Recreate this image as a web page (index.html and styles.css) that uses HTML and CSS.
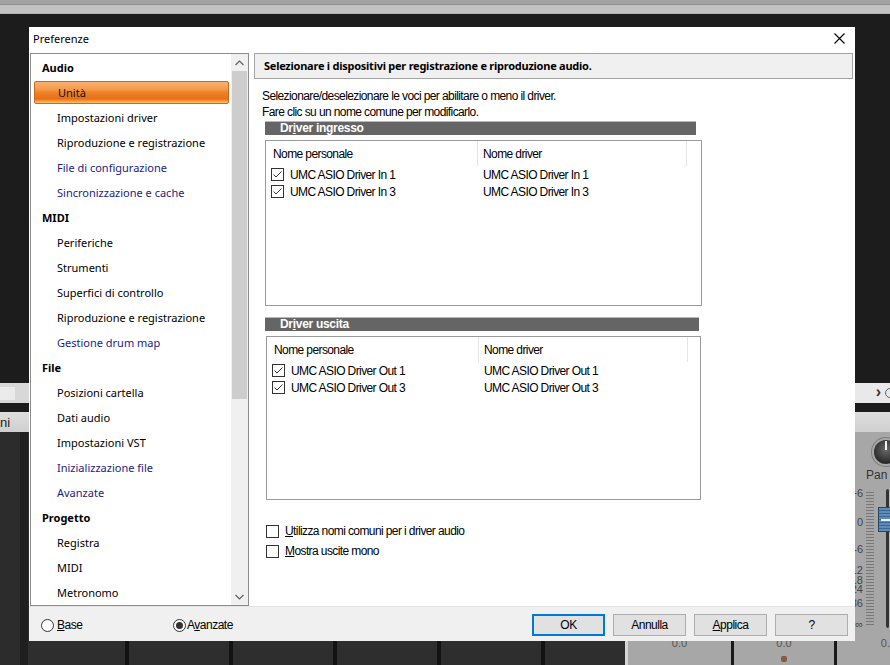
FILE: index.html
```html
<!DOCTYPE html>
<html lang="it">
<head>
<meta charset="utf-8">
<title>Preferenze</title>
<link rel="stylesheet" href="styles.css">
</head>
<body>
<div class="desk">
  <div class="app">
    <div class="bar-a"></div>
    <div class="bar-b"></div>
    <div class="dark-top"></div>
    <div class="tool1">
      <div class="tool1-box"></div>
      <div class="tool1-right"><span class="chev">&#x203A;</span><span class="circ"></span></div>
    </div>
    <div class="sep-dark"></div>
    <div class="tool2"><span class="tool2-text">ni</span></div>
    <div class="lower">
      <div class="tracks">
        <div class="tcol w20"></div>
        <div class="tstripe"></div>
        <div class="tcol w97"></div><div class="tline"></div>
        <div class="tcol w100"></div><div class="tline"></div>
        <div class="tcol w100"></div><div class="tline"></div>
        <div class="tcol w100"></div><div class="tline"></div>
        <div class="tcol w100"></div><div class="tline"></div>
        <div class="tcol grow"></div>
        <div class="tlight"></div>
      </div>
      <div class="mixer">
        <div class="strip s1">
          <div class="strip-spacer"></div>
          <div class="val">0.0</div>
        </div>
        <div class="mdiv"></div>
        <div class="strip s2">
          <div class="strip-spacer"></div>
          <div class="val">0.0</div>
          <div class="pin"></div>
        </div>
        <div class="mdiv"></div>
        <div class="strip s3">
          <div class="knob-row"><div class="knob"></div></div>
          <div class="pan">Pan</div>
          <div class="fader-area">
            <div class="scale">
              <span style="top:0px">+6</span><span style="top:29px">0</span><span style="top:56px">-6</span><span style="top:77px">-12</span><span style="top:87px">-18</span><span style="top:96px">-24</span><span style="top:110px">-36</span><span style="top:131px">-&#x221E;</span>
            </div>
            <div class="ticks"></div>
            <div class="fader"><div class="track"></div><div class="handle" style="top:20px"></div></div>
          </div>
          <div class="val">0.0</div>
        </div>
      </div>
    </div>
  </div>

  <div class="dialog">
    <div class="titlebar">
      <span class="title">Preferenze</span>
      <svg class="close" width="11" height="11" viewBox="0 0 11 11"><path d="M0.5 0.5 L10.5 10.5 M10.5 0.5 L0.5 10.5" stroke="#000" stroke-width="1.1" fill="none"/></svg>
    </div>
    <div class="body">
      <div class="tree">
        <div class="tree-list">
          <div class="ti head">Audio</div>
          <div class="ti sub sel"><span>Unità</span></div>
          <div class="ti sub">Impostazioni driver</div>
          <div class="ti sub">Riproduzione e registrazione</div>
          <div class="ti sub blue">File di configurazione</div>
          <div class="ti sub blue">Sincronizzazione e cache</div>
          <div class="ti head">MIDI</div>
          <div class="ti sub">Periferiche</div>
          <div class="ti sub">Strumenti</div>
          <div class="ti sub">Superfici di controllo</div>
          <div class="ti sub">Riproduzione e registrazione</div>
          <div class="ti sub blue">Gestione drum map</div>
          <div class="ti head">File</div>
          <div class="ti sub">Posizioni cartella</div>
          <div class="ti sub">Dati audio</div>
          <div class="ti sub">Impostazioni VST</div>
          <div class="ti sub blue">Inizializzazione file</div>
          <div class="ti sub blue">Avanzate</div>
          <div class="ti head">Progetto</div>
          <div class="ti sub">Registra</div>
          <div class="ti sub">MIDI</div>
          <div class="ti sub">Metronomo</div>
        </div>
        <div class="vscroll">
          <div class="sbtn"><svg width="9" height="6" viewBox="0 0 9 6"><path d="M0.5 5 L4.5 1 L8.5 5" stroke="#606060" stroke-width="1.2" fill="none"/></svg></div>
          <div class="thumb"></div>
          <div class="strack"></div>
          <div class="sbtn"><svg width="9" height="6" viewBox="0 0 9 6"><path d="M0.5 1 L4.5 5 L8.5 1" stroke="#606060" stroke-width="1.2" fill="none"/></svg></div>
        </div>
      </div>

      <div class="panel">
        <div class="heading">Selezionare i dispositivi per registrazione e riproduzione audio.</div>
        <div class="info">
          <div>Selezionare/deselezionare le voci per abilitare o meno il driver.</div>
          <div>Fare clic su un nome comune per modificarlo.</div>
        </div>
        <div class="gbar gbar1">Dr<u>i</u>ver ingresso</div>
        <div class="lv lv1">
          <div class="lv-head">
            <div class="c1">Nome personale</div>
            <div class="c2">Nome driver</div>
          </div>
          <div class="lv-row">
            <div class="c1"><svg class="cb" width="13" height="13" viewBox="0 0 13 13"><rect x="0.5" y="0.5" width="12" height="12" fill="#fff" stroke="#333"/><path d="M2.5 6.5 L5 9 L10.5 3.5" stroke="#333" stroke-width="1" fill="none"/></svg><span>UMC ASIO Driver In 1</span></div>
            <div class="c2">UMC ASIO Driver In 1</div>
          </div>
          <div class="lv-row">
            <div class="c1"><svg class="cb" width="13" height="13" viewBox="0 0 13 13"><rect x="0.5" y="0.5" width="12" height="12" fill="#fff" stroke="#333"/><path d="M2.5 6.5 L5 9 L10.5 3.5" stroke="#333" stroke-width="1" fill="none"/></svg><span>UMC ASIO Driver In 3</span></div>
            <div class="c2">UMC ASIO Driver In 3</div>
          </div>
        </div>

        <div class="gbar gbar2">Dr<u>i</u>ver uscita</div>
        <div class="lv lv2">
          <div class="lv-head">
            <div class="c1">Nome personale</div>
            <div class="c2">Nome driver</div>
          </div>
          <div class="lv-row">
            <div class="c1"><svg class="cb" width="13" height="13" viewBox="0 0 13 13"><rect x="0.5" y="0.5" width="12" height="12" fill="#fff" stroke="#333"/><path d="M2.5 6.5 L5 9 L10.5 3.5" stroke="#333" stroke-width="1" fill="none"/></svg><span>UMC ASIO Driver Out 1</span></div>
            <div class="c2">UMC ASIO Driver Out 1</div>
          </div>
          <div class="lv-row">
            <div class="c1"><svg class="cb" width="13" height="13" viewBox="0 0 13 13"><rect x="0.5" y="0.5" width="12" height="12" fill="#fff" stroke="#333"/><path d="M2.5 6.5 L5 9 L10.5 3.5" stroke="#333" stroke-width="1" fill="none"/></svg><span>UMC ASIO Driver Out 3</span></div>
            <div class="c2">UMC ASIO Driver Out 3</div>
          </div>
        </div>

        <div class="opts">
          <div class="opt"><svg class="cb" width="13" height="13" viewBox="0 0 13 13"><rect x="0.5" y="0.5" width="12" height="12" fill="#fff" stroke="#333"/></svg><span><u>U</u>tilizza nomi comuni per i driver audio</span></div>
          <div class="opt"><svg class="cb" width="13" height="13" viewBox="0 0 13 13"><rect x="0.5" y="0.5" width="12" height="12" fill="#fff" stroke="#333"/></svg><span><u>M</u>ostra uscite mono</span></div>
        </div>
      </div>
    </div>
    <div class="footer">
      <div class="radio r1"><svg width="13" height="13" viewBox="0 0 13 13"><circle cx="6.5" cy="6.5" r="6" fill="#fff" stroke="#333"/></svg><span><u>B</u>ase</span></div>
      <div class="radio r2"><svg width="13" height="13" viewBox="0 0 13 13"><circle cx="6.5" cy="6.5" r="6" fill="#fff" stroke="#333"/><circle cx="6.5" cy="6.5" r="3.5" fill="#333"/></svg><span>A<u>v</u>anzate</span></div>
      <div class="buttons">
        <div class="btn default">OK</div>
        <div class="btn">Annulla</div>
        <div class="btn"><u>A</u>pplica</div>
        <div class="btn">?</div>
      </div>
    </div>
  </div>
</div>
</body>
</html>
```
FILE: styles.css
```css
* { box-sizing: border-box; }
html, body { margin: 0; padding: 0; }
body { width: 890px; height: 665px; overflow: hidden; background: #1c1c1c; font-family: "Liberation Sans", Arial, sans-serif; }

.desk { position: relative; width: 890px; height: 665px; overflow: hidden; }

/* ---------- background application ---------- */
.app { display: flex; flex-direction: column; width: 890px; height: 665px; }
.bar-a { height: 5px; background: #a2a2a2; border-bottom: 1px solid #8e8e8e; }
.bar-b { height: 9px; background: #c2c2c2; border-bottom: 1px solid #b2b2b2; }
.dark-top { height: 369px; background: #1c1c1c; }
.tool1 { height: 20px; background: #d8d8d8; display: flex; align-items: center; justify-content: space-between; }
.tool1-box { width: 15px; height: 13px; background: #ebebeb; }
.tool1-right { width: 50px; height: 20px; background: #e9e9e9; display: flex; align-items: center; justify-content: flex-end; gap: 4px; }
.chev { font-size: 16px; font-weight: bold; color: #333; line-height: 1; margin-top: -2px; }
.circ { width: 10px; height: 10px; border: 1px solid #666; border-radius: 50%; margin-right: -5px; }
.sep-dark { height: 9px; background: #1c1c1c; }
.tool2 { height: 20px; background: linear-gradient(#dedede, #cfcfcf); display: flex; align-items: center; }
.tool2-text { font-size: 13px; color: #222; }
.lower { flex: 1; display: flex; }
.tracks { width: 628px; display: flex; background: #2e2e2e; }
.tcol { background: #2e2e2e; }
.w20 { width: 20px; background: #2c2c2c; }
.w97 { width: 97px; }
.w100 { width: 100px; }
.grow { flex: 1; }
.tstripe { width: 8px; background: #1f1f1f; }
.tline { width: 4px; background: #121212; }
.tlight { width: 3px; background: #d6d6d6; }
.mixer { flex: 1; display: flex; background: #a7a7a7; overflow: hidden; }
.mdiv { width: 3px; background: #1a1a1a; flex: none; }
.strip { flex: none; display: flex; flex-direction: column; padding-left: 16px; }
.s1 { width: 103px; }
.s2 { width: 100px; }
.s3 { width: 103px; }
.strip-spacer { height: 201px; }
.knob-row { height: 37px; display: flex; padding-top: 8px; padding-left: 21px; }
.knob { width: 24px; height: 24px; border-radius: 50%; background: radial-gradient(circle at 50% 40%, #6a6a6a, #2a2a2a 70%); box-shadow: 0 0 0 2px #a7a7a7, 0 0 0 3px #7c7c7c; position: relative; }
.knob::after { content: ""; position: absolute; left: 11px; top: 1px; width: 2px; height: 9px; background: #f4f4f4; }
.pan { height: 13px; font-size: 12px; line-height: 13px; color: #333; padding-left: 13px; }
.fader-area { height: 146px; margin-top: 5px; display: flex; }
.scale { position: relative; width: 10px; font-size: 11px; color: #444; }
.scale span { position: absolute; right: 0; line-height: 8px; margin-top: 2px; }
.ticks { width: 8px; margin-left: 3px; margin-top: 3px; height: 136px; background: repeating-linear-gradient(#a7a7a7 0 2px, #777 2px 3px); }
.fader { position: relative; width: 30px; margin-left: 1px; }
.track { position: absolute; left: 11px; top: 2px; width: 4px; height: 139px; background: #333; border-radius: 2px; border-right: 1px solid #bbb; }
.handle { position: absolute; left: 3px; width: 20px; height: 25px; border: 1px solid #2b4660; background: repeating-linear-gradient(#5d8cb9 0 2px, #3d6690 2px 3px); }
.handle::after { content: ""; position: absolute; left: 2px; right: 2px; top: 11px; height: 2px; background: #e8f0f8; }
.val { height: 14px; margin-top: 3px; font-size: 11px; line-height: 14px; color: #555; text-align: center; margin-left: -16px; }
.pin { width: 6px; height: 6px; margin: 6px auto 0; background: #8a5a40; border-radius: 2px; position: relative; left: -8px; }

/* ---------- dialog ---------- */
.dialog { position: absolute; left: 29px; top: 27px; width: 826px; height: 614px; background: #fff; display: flex; flex-direction: column; font-family: "Noto Sans", sans-serif; font-size: 11px; color: #000; }
.titlebar { height: 26px; flex: none; display: flex; align-items: center; justify-content: space-between; padding: 0 10px 3px 4px; }
.title { font-size: 11px; }
.close { display: block; margin-top: -1px; }

.body { height: 553px; flex: none; display: flex; }
.tree { width: 219px; margin-left: 1px; border: 1px solid #8c8c8c; display: flex; }
.tree-list { width: 200px; padding-top: 1px; overflow: hidden; }
.ti { height: 25px; line-height: 25px; white-space: nowrap; }
.head { padding-left: 11px; font-weight: bold; }
.sub { padding-left: 26px; }
.blue { color: #1d1d7e; }
.sel { padding: 1px 2px 1px 3px; }
.sel span { display: block; height: 23px; line-height: 22px; padding-left: 23px; border: 1px solid #c96a1c; border-radius: 2px;
  background: linear-gradient(#f9b070 0%, #f59a4a 35%, #ef8228 50%, #e86e14 80%, #f4a040 92%, #fbc070 100%); color: #111; }
.vscroll { width: 17px; display: flex; flex-direction: column; background: #f0f0f0; }
.sbtn { height: 17px; display: flex; align-items: center; justify-content: center; }
.thumb { height: 328px; margin: 0 1px; background: #cdcdcd; }
.strack { flex: 1; }

.panel { width: 599px; margin-left: 5px; display: flex; flex-direction: column; }
.heading { height: 26px; background: #f0f0f0; border: 1px solid #a3a3a3; padding-left: 9px; font-weight: bold; line-height: 24px; font-size: 11px; letter-spacing: -0.25px; }
.info { margin-top: 9px; margin-left: 8px; font-family: "Liberation Sans", Arial, sans-serif; font-size: 12px; letter-spacing: -0.6px; line-height: 16px; }
.gbar { margin-left: 11px; height: 14px; background: #656565; border-top: 1px solid #b8b8b8; color: #fff; font-family: "Liberation Sans", Arial, sans-serif; font-weight: bold; font-size: 12px; letter-spacing: -0.3px; line-height: 13px; padding-left: 15px; }
.gbar1 { width: 431px; margin-top: 1px; }
.gbar2 { width: 434px; margin-top: 11px; }
.lv { border: 1px solid #9a9a9a; font-family: "Liberation Sans", Arial, sans-serif; font-size: 12px; letter-spacing: -0.6px; margin-top: 5px; }
.lv1 { width: 437px; height: 166px; margin-left: 11px; }
.lv2 { width: 435px; height: 164px; margin-left: 12px; }
.lv-head { display: flex; height: 25px; }
.lv-head .c1 { width: 212px; border-right: 1px solid #e5e5e5; padding: 2px 0 0 7px; line-height: 23px; }
.lv-head .c2 { width: 209px; border-right: 1px solid #e5e5e5; padding: 2px 0 0 5px; line-height: 23px; }
.lv-row { display: flex; height: 17px; align-items: center; }
.lv-row .c1 { width: 212px; display: flex; align-items: center; gap: 6px; padding-left: 5px; }
.lv-row .c2 { padding-left: 5px; }
.cb { display: block; flex: none; }

.opts { margin-top: 21px; margin-left: 12px; font-family: "Liberation Sans", Arial, sans-serif; font-size: 12px; letter-spacing: -0.6px; }
.opt { height: 20px; display: flex; align-items: center; gap: 6px; }
u { text-decoration: underline; text-underline-offset: 1px; }

.footer { flex: 1; background: #f0f0f0; border-top: 1px solid #e3e3e3; display: flex; align-items: center; padding: 2px 7px 0 12px; font-family: "Liberation Sans", Arial, sans-serif; font-size: 12px; letter-spacing: -0.5px; }
.radio { display: flex; align-items: center; gap: 3px; }
.radio svg { display: block; }
.r1 { width: 132px; }
.r2 { gap: 1px; }
.buttons { margin-left: auto; display: flex; gap: 8px; }
.btn { width: 73px; height: 22px; background: #e1e1e1; border: 1px solid #adadad; text-align: center; line-height: 20px; }
.btn.default { border: 2px solid #0078d7; line-height: 18px; }
```
